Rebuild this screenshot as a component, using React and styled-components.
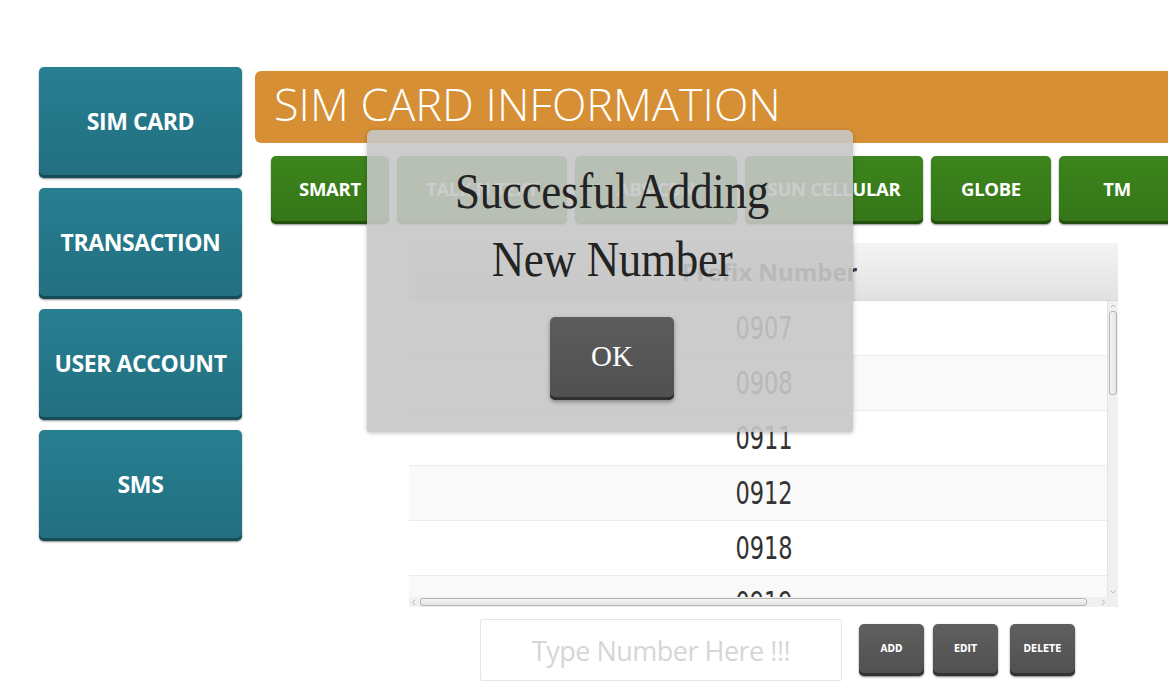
import React from 'react';
import styled, { createGlobalStyle } from 'styled-components';
import { ChevronUp, ChevronDown, ChevronLeft, ChevronRight } from 'lucide-react';

const GlobalStyle = createGlobalStyle({
  'html, body': {
    margin: 0,
    padding: 0,
    background: '#ffffff',
    overflow: 'hidden',
    fontFamily: '"Open Sans", "Liberation Sans", sans-serif'
  }
})

const Page = styled.div({
  position: 'relative',
  width: '1168px',
  height: '694px',
  overflow: 'hidden',
  display: 'flex',
  alignItems: 'flex-start',
  padding: '67px 0 0 39px',
  boxSizing: 'border-box'
})

const Sidebar = styled.div({
  display: 'flex',
  flexDirection: 'column',
  gap: '10px',
  width: '203px',
  flexShrink: 0
})

const NavButton = styled.div({
  height: '111px',
  borderRadius: '5px',
  background: 'linear-gradient(180deg, #277f90 0%, #226f80 100%)',
  boxShadow: 'inset 0 -3px 0 #164c58, 0 1px 2px rgba(0,0,0,0.45)',
  display: 'flex',
  alignItems: 'center',
  justifyContent: 'center',
  color: '#ffffff',
  fontWeight: 700,
  fontSize: '23px',
  letterSpacing: '-0.4px',
  paddingBottom: '4px',
  boxSizing: 'border-box'
})

const Main = styled.div({
  flex: 1,
  minWidth: 0,
  marginLeft: '13px',
  paddingTop: '4px',
  display: 'flex',
  flexDirection: 'column'
})

const Header = styled.div({
  height: '72px',
  marginRight: '-30px',
  background: '#d68f35',
  borderRadius: '6px 0 0 6px',
  color: '#ffffff',
  fontWeight: 300,
  fontSize: '45px',
  lineHeight: '66px',
  paddingLeft: '19px',
  boxSizing: 'border-box',
  letterSpacing: '0px'
})

const Tabs = styled.div({
  display: 'flex',
  gap: '8px',
  marginTop: '13px',
  paddingLeft: '16px',
  height: '68px'
})

const Tab = styled.div(({ w }) => ({
  width: `${w}px`,
  flexShrink: 0,
  borderRadius: '5px',
  background: 'linear-gradient(180deg, #3c841c 0%, #357618 100%)',
  boxShadow: 'inset 0 -3px 0 #23500e, 0 1px 2px rgba(0,0,0,0.45)',
  display: 'flex',
  alignItems: 'center',
  justifyContent: 'center',
  color: '#ffffff',
  fontWeight: 700,
  fontSize: '18.5px',
  letterSpacing: '-0.3px',
  paddingBottom: '3px',
  boxSizing: 'border-box'
}))

const TableBox = styled.div({
  marginTop: '19px',
  marginLeft: '154px',
  width: '709px',
  height: '364px',
  display: 'grid',
  gridTemplateColumns: '698px 11px',
  gridTemplateRows: '58px 296px 10px',
  background: '#ffffff'
})

const TableHead = styled.div({
  gridColumn: '1 / 3',
  background: 'linear-gradient(180deg, #f4f4f4 0%, #e1e1e1 100%)',
  borderBottom: '1px solid #d8d8d8',
  display: 'flex',
  alignItems: 'center',
  justifyContent: 'center',
  fontWeight: 700,
  fontSize: '24px',
  color: '#3a3a3a',
  boxSizing: 'border-box',
  paddingLeft: '12px'
})

const Rows = styled.div({
  overflow: 'hidden'
})

const Row = styled.div(({ odd }) => ({
  height: '55px',
  borderBottom: '1px solid #ececec',
  boxSizing: 'border-box',
  background: odd ? '#f9f9f9' : '#ffffff',
  display: 'flex',
  alignItems: 'center',
  justifyContent: 'center',
  paddingLeft: '12px'
}))

const Num = styled.span({
  display: 'inline-block',
  fontFamily: '"DejaVu Sans Condensed", "DejaVu Sans", sans-serif',
  fontStretch: 'condensed',
  fontSize: '25px',
  color: '#333333',
  transform: 'scaleY(1.28)'
})

const VTrack = styled.div({
  background: '#f0f0f0',
  borderLeft: '1px solid #e2e2e2',
  display: 'flex',
  flexDirection: 'column',
  alignItems: 'center',
  color: '#9a9a9a',
  boxSizing: 'border-box',
  padding: '1px 0'
})

const VThumb = styled.div({
  width: '8px',
  height: '84px',
  marginTop: '1px',
  borderRadius: '3px',
  border: '1px solid #b4b4b4',
  background: 'linear-gradient(90deg, #f6f6f6, #e4e4e4)',
  boxSizing: 'border-box'
})

const Spacer = styled.div({
  flex: 1
})

const HTrack = styled.div({
  gridColumn: '1 / 3',
  background: '#f0f0f0',
  display: 'flex',
  alignItems: 'center',
  color: '#9a9a9a',
  paddingRight: '10px'
})

const HThumb = styled.div({
  width: '667px',
  height: '8px',
  marginLeft: '2px',
  borderRadius: '3px',
  border: '1px solid #b4b4b4',
  background: 'linear-gradient(180deg, #f6f6f6, #e4e4e4)',
  boxSizing: 'border-box'
})

const Controls = styled.div({
  display: 'flex',
  alignItems: 'center',
  marginTop: '12px',
  marginLeft: '225px'
})

const NumberInput = styled.input({
  width: '362px',
  height: '62px',
  border: '1px solid #e6e6e6',
  borderRadius: '2px',
  boxSizing: 'border-box',
  textAlign: 'center',
  fontFamily: '"Open Sans", sans-serif',
  fontSize: '27px',
  color: '#333',
  outline: 'none',
  letterSpacing: '-0.5px',
  '&::placeholder': {
    color: '#d6d6d6'
  }
})

const ActionButton = styled.div(({ gap }) => ({
  width: '65px',
  height: '52px',
  marginLeft: `${gap}px`,
  borderRadius: '5px',
  background: 'linear-gradient(180deg, #5f5f5f 0%, #505050 100%)',
  boxShadow: 'inset 0 -3px 0 #333, 0 1px 2px rgba(0,0,0,0.5)',
  display: 'flex',
  alignItems: 'center',
  justifyContent: 'center',
  color: '#ffffff',
  fontFamily: '"DejaVu Sans Condensed", "DejaVu Sans", sans-serif',
  fontStretch: 'condensed',
  fontWeight: 700,
  fontSize: '10px',
  paddingBottom: '3px',
  boxSizing: 'border-box'
}))

const Dialog = styled.div({
  position: 'absolute',
  left: '367px',
  top: '130px',
  width: '486px',
  height: '302px',
  borderRadius: '6px 6px 2px 2px',
  background: 'rgba(198,198,198,0.9)',
  boxShadow: '0 1px 4px rgba(0,0,0,0.25)',
  display: 'flex',
  flexDirection: 'column',
  alignItems: 'center',
  paddingTop: '35px',
  boxSizing: 'border-box'
})

const Message = styled.div({
  fontFamily: '"Liberation Serif", "Times New Roman", serif',
  fontSize: '45px',
  lineHeight: '61px',
  color: '#232323',
  textAlign: 'center',
  letterSpacing: '-0.3px',
  paddingLeft: '4px',
  transform: 'scaleY(1.12)'
})

const OkButton = styled.div({
  marginTop: '30px',
  marginLeft: '4px',
  width: '124px',
  height: '83px',
  borderRadius: '5px',
  background: 'linear-gradient(180deg, #5c5c5c 0%, #505050 100%)',
  boxShadow: 'inset 0 -3px 0 #2f2f2f, 0 2px 4px rgba(0,0,0,0.35)',
  display: 'flex',
  alignItems: 'center',
  justifyContent: 'center',
  color: '#ffffff',
  fontFamily: '"Liberation Serif", "Times New Roman", serif',
  fontSize: '29px',
  paddingBottom: '4px',
  boxSizing: 'border-box'
})

const navItems = ['SIM CARD', 'TRANSACTION', 'USER ACCOUNT', 'SMS']

const tabs = [
  { label: 'SMART', w: 118 },
  { label: 'TALK N TEXT', w: 170 },
  { label: 'ABS-CBN', w: 162 },
  { label: 'SUN CELLULAR', w: 178 },
  { label: 'GLOBE', w: 120 },
  { label: 'TM', w: 116 }
]

const prefixes = ['0907', '0908', '0911', '0912', '0918', '0919']

const App = () => {
  return (
    <>
      <GlobalStyle />
      <Page>
        <Sidebar>
          {navItems.map(item => (
            <NavButton key={item}>{item}</NavButton>
          ))}
        </Sidebar>
        <Main>
          <Header>SIM CARD INFORMATION</Header>
          <Tabs>
            {tabs.map(t => (
              <Tab key={t.label} w={t.w}>{t.label}</Tab>
            ))}
          </Tabs>
          <TableBox>
            <TableHead>Prefix Number</TableHead>
            <Rows>
              {prefixes.map((p, i) => (
                <Row key={p} odd={i % 2 === 1}>
                  <Num>{p}</Num>
                </Row>
              ))}
            </Rows>
            <VTrack>
              <ChevronUp size={8} strokeWidth={2} />
              <VThumb />
              <Spacer />
              <ChevronDown size={8} strokeWidth={2} />
            </VTrack>
            <HTrack>
              <ChevronLeft size={9} strokeWidth={2} />
              <HThumb />
              <Spacer />
              <ChevronRight size={9} strokeWidth={2} />
            </HTrack>
          </TableBox>
          <Controls>
            <NumberInput placeholder='Type Number Here !!!' />
            <ActionButton gap={17}>ADD</ActionButton>
            <ActionButton gap={9}>EDIT</ActionButton>
            <ActionButton gap={12}>DELETE</ActionButton>
          </Controls>
        </Main>
        <Dialog>
          <Message>Succesful Adding<br />New Number</Message>
          <OkButton>OK</OkButton>
        </Dialog>
      </Page>
    </>
  )
}

export default App
